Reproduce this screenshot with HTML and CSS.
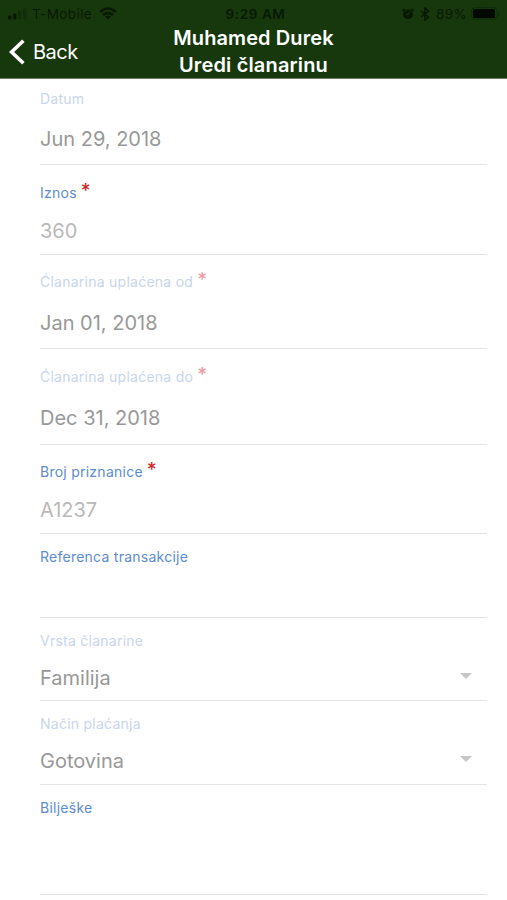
FILE: index.html
```html
<!DOCTYPE html>
<html lang="hr">
<head>
<meta charset="utf-8">
<title>Uredi članarinu</title>
<link rel="stylesheet" href="styles.css">
</head>
<body>
<header class="header">
  <div class="status">
    <div class="status-left">
      <svg class="signal" width="20" height="12" viewBox="0 0 20 12"><rect x="0" y="7.5" width="3.4" height="4" rx="1"/><rect x="5" y="5.5" width="3.4" height="6" rx="1"/><g opacity=".35"><rect x="10" y="3" width="3.4" height="8.5" rx="1"/><rect x="15" y="0.5" width="3.4" height="11" rx="1"/></g></svg>
      <span class="carrier">T-Mobile</span>
      <svg class="wifi" width="18" height="13" viewBox="0 0 18 13"><g fill="none" stroke="#081906" stroke-width="2.5"><path d="M1.2 5Q9-2 16.8 5"/><path d="M4 8Q9 3.7 14 8"/></g><path d="M6.2 9.6Q9 7.3 11.8 9.6L9 12.4Z"/></svg>
    </div>
    <span class="time">9:29 AM</span>
    <div class="status-right">
      <svg width="12" height="12" viewBox="0 0 12 12"><circle cx="6" cy="6.4" r="4.9"/><path d="M.5 3.2L3 .8M11.5 3.2L9 .8" stroke="#081906" stroke-width="1.8"/><path d="M8 3.8L6 6.8L4.3 6" fill="none" stroke="#17380c" stroke-width="1"/></svg>
      <svg class="bluetooth" width="10" height="14" viewBox="0 0 10 14"><path d="M1 4L8.5 10L5 13V1L8.5 4L1 10" fill="none" stroke="#081906" stroke-width="1.5"/></svg>
      <span class="percent">89%</span>
      <svg class="battery" width="30" height="13" viewBox="0 0 30 13"><rect x=".7" y=".7" width="25.6" height="11.4" rx="3" fill="none" stroke="#0f2a0b" stroke-width="1"/><rect x="2" y="2" width="22" height="9" rx="1.5" fill="#020802"/><path d="M27.5 4Q29.5 6.4 27.5 9Z" fill="#0f2a0b"/></svg>
    </div>
  </div>
  <div class="nav">
    <div class="back">
      <svg width="17" height="26" viewBox="0 0 17 26"><path d="M15.4 1.8L3.6 13L15.4 24.2" fill="none" stroke="#fff" stroke-width="3.6"/></svg>
      <span>Back</span>
    </div>
    <h1 class="title"><span class="person">Muhamed Durek</span><span class="action">Uredi članarinu</span></h1>
  </div>
</header>
<main class="form">
  <div class="field date-first muted"><div class="label"><span>Datum</span></div><div class="value">Jun 29, 2018</div></div>
  <div class="field amount"><div class="label"><span>Iznos</span><i>*</i></div><div class="value light">360</div></div>
  <div class="field date muted"><div class="label"><span>Ćlanarina uplaćena od</span><i>*</i></div><div class="value">Jan 01, 2018</div></div>
  <div class="field date until muted"><div class="label"><span>Ćlanarina uplaćena do</span><i>*</i></div><div class="value">Dec 31, 2018</div></div>
  <div class="field amount receipt"><div class="label"><span>Broj priznanice</span><i>*</i></div><div class="value light">A1237</div></div>
  <div class="field compact"><div class="label"><span>Referenca transakcije</span></div></div>
  <div class="field compact muted"><div class="label"><span>Vrsta članarine</span></div><div class="value">Familija<b class="caret"></b></div></div>
  <div class="field compact muted"><div class="label"><span>Način plaćanja</span></div><div class="value">Gotovina<b class="caret"></b></div></div>
  <div class="field notes"><div class="label"><span>Bilješke</span></div></div>
</main>
</body>
</html>
```
FILE: styles.css
```css
* { box-sizing: border-box; }
body { margin: 0; height: 900px; overflow: hidden; background: #fff; font-family: Inter, "Liberation Sans", sans-serif; }
svg { display: block; flex: none; fill: #081906; }
.header { height: 79px; background: #17380c; border-bottom: 1px solid #6d8167; }
.status { display: grid; grid-template-columns: 1fr auto 1fr; align-items: center; height: 27px; padding: 0 6px 0 8px; color: #081906; font-size: 13.5px; line-height: 26px; }
.status-left, .status-right { display: flex; align-items: center; }
.status-right { justify-content: flex-end; }
.carrier { margin-left: 4px; letter-spacing: .4px; }
.wifi { margin-left: 7px; }
.time { margin-left: 2px; font-weight: 600; font-size: 13.5px; letter-spacing: .6px; }
.bluetooth { margin-left: 6px; }
.percent { margin-left: 6px; letter-spacing: .3px; }
.battery { margin-left: 4px; }
.nav { display: grid; grid-template-columns: 1fr auto 1fr; height: 51px; color: #fff; }
.back { display: flex; align-items: center; height: 49px; padding-left: 8px; font-size: 20px; letter-spacing: -.5px; }
.back span { margin-left: 8px; padding-top: 1px; }
.title { display: flex; flex-direction: column; align-items: center; margin: -2px 0 0; font-size: 20px; line-height: 27px; font-weight: 600; }
.person { letter-spacing: .1px; }
.action { letter-spacing: .15px; }
.form { padding: 0 20px 0 40px; }
.field { border-bottom: 1px solid #e4e4e4; }
.label { display: flex; height: 20px; line-height: 20px; font-size: 14px; letter-spacing: .25px; color: #5d8bd3; }
.label i { margin: -2px 0 0 4px; font-style: normal; font-weight: 500; font-size: 19px; color: #cf2a2a; }
.muted .label { color: #c9d5ec; }
.muted .label i { color: #ee9ca3; }
.value { display: flex; align-items: center; justify-content: space-between; height: 28px; line-height: 28px; font-size: 20px; color: #989898; letter-spacing: 0; }
.value.light { color: #b9b9b9; }
.date-first { height: 86px; padding-top: 10px; }
.date-first .value { margin-top: 16px; }
.amount { height: 90px; padding-top: 18px; }
.amount .value { margin-top: 14px; }
.date { height: 94px; padding-top: 17px; }
.date .value { margin-top: 17px; }
.until { height: 96px; padding-top: 18px; }
.receipt { height: 89px; padding-top: 17px; }
.compact { height: 83.5px; padding-top: 13px; }
.compact .value { margin-top: 13px; }
.notes { height: 110.5px; padding-top: 13px; }
.caret { margin-right: 15px; border: 6px solid transparent; border-top-color: #c6c6c6; border-bottom: 0; margin-top: -4px; }
```
